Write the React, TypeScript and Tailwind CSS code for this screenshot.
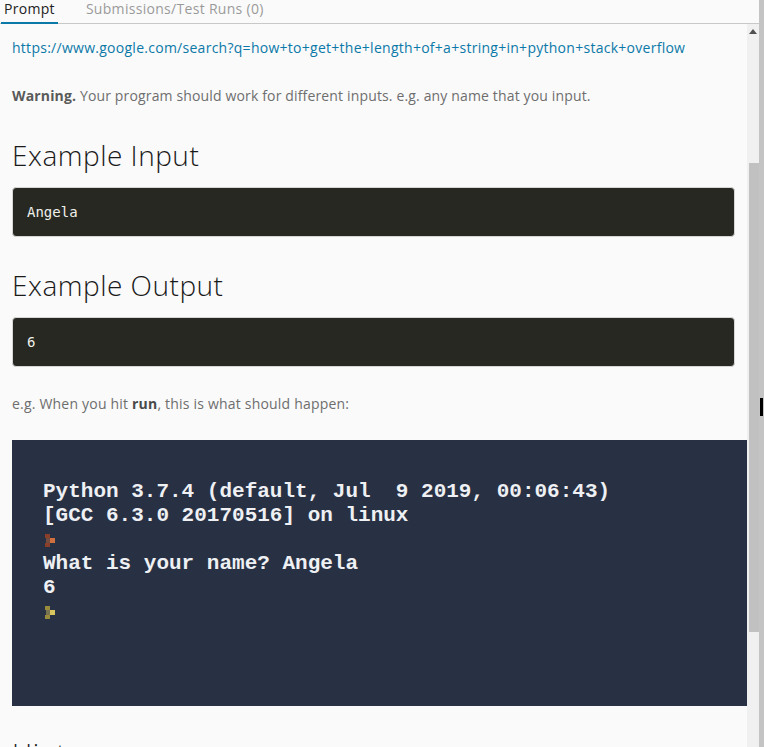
import React from 'react';

const sans = "font-['Open_Sans','Liberation_Sans',sans-serif]";

function PromptGlyph({ tone }: { tone: 'red' | 'yellow' }) {
  const a = tone === 'red' ? '#d0703f' : '#d6c45e';
  const b = tone === 'red' ? '#8a4028' : '#9a8a3c';
  return (
    <svg width="11" height="13" viewBox="0 0 11 13" className="block">
      <rect x="0" y="0" width="5" height="4" fill={b} />
      <rect x="5" y="4" width="5" height="5" fill={a} />
      <rect x="0" y="9" width="5" height="4" fill={b} />
      <rect x="1" y="4" width="4" height="5" fill={a} opacity="0.45" />
    </svg>
  );
}

function CodeBlock({ children }: { children: React.ReactNode }) {
  return (
    <div className="h-[50px] rounded-[4px] border border-[#d6d6d6] bg-[#272822] flex items-center px-[14px]">
      <span className="font-['DejaVu_Sans_Mono',monospace] text-[14px] text-[#f0f0ea]">{children}</span>
    </div>
  );
}

function Terminal() {
  const line = "font-['Liberation_Mono','Courier_New',monospace] text-[21px] leading-[24px] text-[#eef0f3] font-bold whitespace-pre h-[24px]";
  return (
    <div className="h-[266px] bg-[#283044] pt-[40px] pl-[31px]">
      <div className={line}>Python 3.7.4 (default, Jul  9 2019, 00:06:43)</div>
      <div className={line}>[GCC 6.3.0 20170516] on linux</div>
      <div className="h-[24px] flex items-center pl-[2px]"><PromptGlyph tone="red" /></div>
      <div className={line}>What is your name? Angela</div>
      <div className={line}>6</div>
      <div className="h-[24px] flex items-center pl-[2px]"><PromptGlyph tone="yellow" /></div>
    </div>
  );
}

export default function App() {
  return (
    <div className={`h-[747px] w-[764px] overflow-hidden flex bg-[#fafafa] ${sans}`}>
      <div className="w-[759px] flex flex-col">
        {/* tabs */}
        <div className="h-[24px] border-b border-[#c8c8c8] flex items-start text-[14px] leading-[18px] tracking-[0.3px] shrink-0">
          <div className="relative ml-[1px] px-[3px] h-full">
            <span className="text-[#222]">Prompt</span>
            <div className="absolute left-0 right-0 bottom-[-1px] h-[2px] bg-[#0b79a8]" />
          </div>
          <span className="ml-[28px] text-[#9a9a9a]">Submissions/Test Runs (0)</span>
        </div>

        <div className="flex flex-1 min-h-0">
          <div className="w-[747px] px-[12px] pt-[14px]">
            <a className="block text-[14px] leading-[20px] tracking-[0.27px] text-[#0b79a8]">
              https://www.google.com/search?q=how+to+get+the+length+of+a+string+in+python+stack+overflow
            </a>
            <p className="mt-[28px] text-[14px] leading-[20px] tracking-[0.15px] text-[#6e6e6e]">
              <b className="font-bold text-[#5a5a5a]">Warning.</b> Your program should work for different inputs. e.g. any name that you input.
            </p>

            <h2 className="mt-[32px] text-[28px] leading-[34px] tracking-[0.5px] font-light text-[#1a1a1a]">Example Input</h2>
            <div className="mt-[15px] w-[723px]">
              <CodeBlock>Angela</CodeBlock>
            </div>

            <h2 className="mt-[31px] text-[28px] leading-[34px] tracking-[0.5px] font-light text-[#1a1a1a]">Example Output</h2>
            <div className="mt-[15px] w-[723px]">
              <CodeBlock>6</CodeBlock>
            </div>

            <p className="mt-[27px] text-[14px] leading-[20px] tracking-[0.2px] text-[#6e6e6e]">
              e.g. When you hit <b className="font-bold text-[#4a4a4a]">run</b>, this is what should happen:
            </p>

            <div className="mt-[26px] -mr-[12px]">
              <Terminal />
            </div>

            <h2 className="mt-[30px] text-[28px] leading-[34px] tracking-[0.5px] font-light text-[#1a1a1a]">Hint</h2>
          </div>

          {/* scrollbar */}
          <div className="w-[12px] bg-[#f0f0f0] flex flex-col items-center relative">
            <svg width="8" height="5" viewBox="0 0 8 5" className="mt-[5px]">
              <path d="M0 5 L4 0 L8 5 Z" fill="#505050" />
            </svg>
            <div className="absolute left-[2px] w-[10px] top-[139px] h-[469px] bg-[#c1c1c1]" />
          </div>
        </div>
      </div>
      <div className="w-[5px] bg-[#c4c4c4] relative">
        <div className="absolute left-[1px] top-[398px] w-[3px] h-[18px] bg-black" />
      </div>
    </div>
  );
}
